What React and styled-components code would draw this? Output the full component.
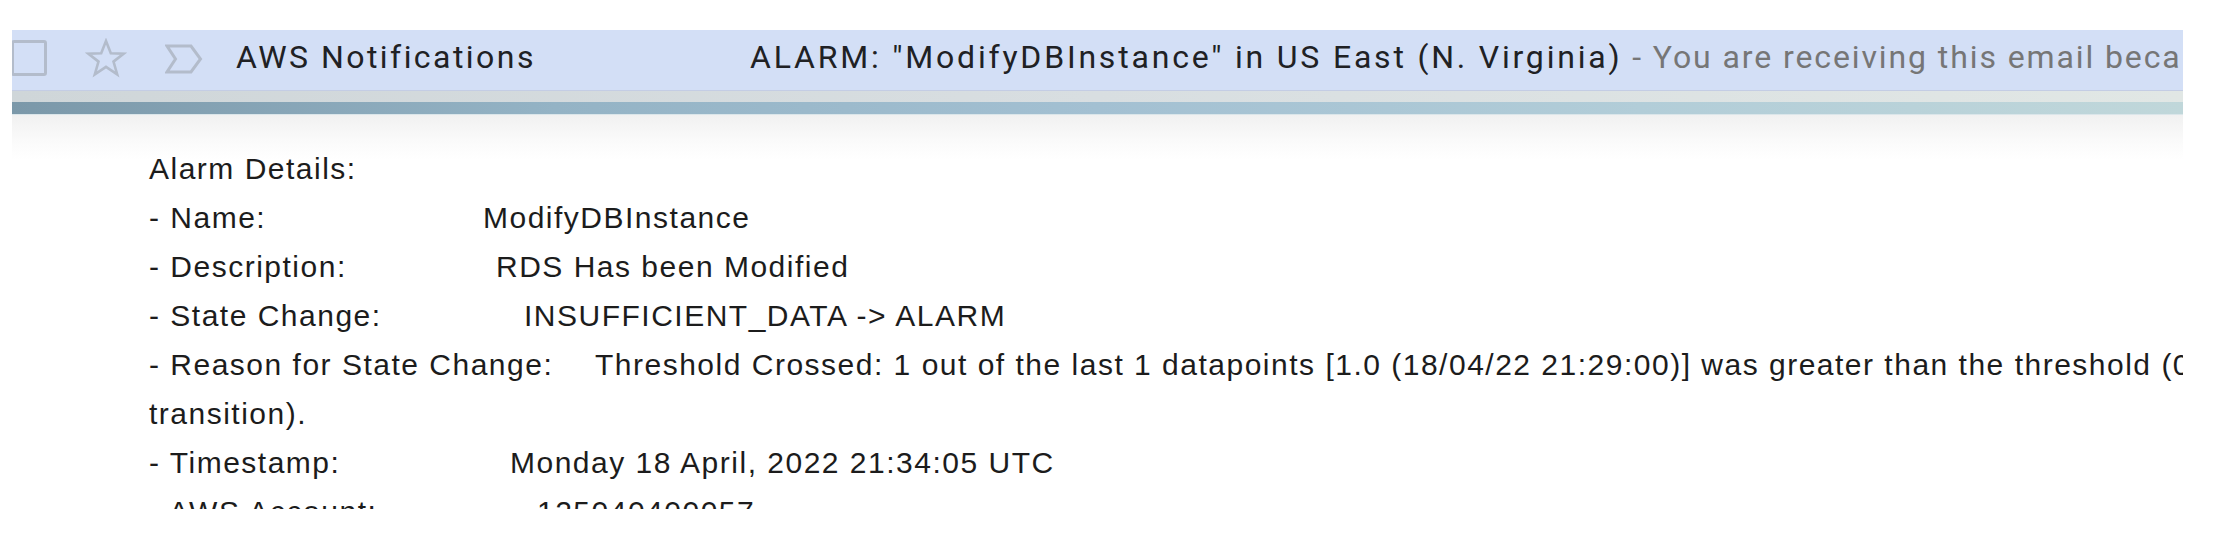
import React from "react";
import styled, { createGlobalStyle } from "styled-components";

const Global = createGlobalStyle`
  html, body { margin: 0; padding: 0; background: #ffffff; }
  body { width: 2226px; height: 558px; overflow: hidden; }
`;

const Page = styled.div`
  padding: 30px 0 0 12px;
`;

const Card = styled.div`
  width: 2171px;
  overflow: hidden;
`;

const Row = styled.div`
  display: flex;
  align-items: center;
  height: 60px;
  background: #d3dff6;
  border-bottom: 1px solid #c4cde4;
  white-space: nowrap;
  overflow: hidden;
  font-family: Roboto, "Liberation Sans", sans-serif;
  font-size: 32px;
  color: #202124;
`;

const Checkbox = styled.span`
  flex: none;
  box-sizing: border-box;
  width: 36px;
  height: 36px;
  margin-left: -1px;
  margin-top: -4px;
  border: 3px solid #b3bccb;
  border-radius: 3px;
`;

const IconBox = styled.span`
  flex: none;
  display: flex;
  margin-left: ${(p) => p.$ml}px;
  margin-top: ${(p) => p.$mt || 0}px;
`;

const Sender = styled.span`
  flex: none;
  width: 514px;
  margin-left: 33px;
  margin-top: -6px;
  letter-spacing: 2.45px;
`;

const Subject = styled.span`
  flex: none;
  margin-top: -6px;
  letter-spacing: 2.8px;
`;

const Snippet = styled.span`
  color: #767676;
  letter-spacing: 1.9px;
`;

const GreyBand = styled.div`
  height: 11px;
  background: linear-gradient(90deg, #cfd6d9 0%, #d8dee1 50%, #e1e7e5 100%);
`;

const BlueBand = styled.div`
  height: 12px;
  background: linear-gradient(90deg, #7b98a9 0%, #94b3c5 25%, #a3c0d2 50%, #b2cdd8 75%, #c0d7da 100%);
  border-bottom: 1px solid #dbe6ea;
`;

const Body = styled.div`
  height: 394px;
  overflow: hidden;
  padding: 29px 0 0 137px;
  box-sizing: border-box;
  background: linear-gradient(180deg, #f1f1f1 0px, #fbfbfb 28px, #ffffff 45px);
  font-family: "Liberation Sans", Arial, sans-serif;
  font-size: 30px;
  letter-spacing: 1.5px;
  line-height: 49px;
  color: #1c1c1c;
`;

const Line = styled.div`
  display: flex;
  white-space: nowrap;
`;

const Label = styled.span`
  flex: none;
  width: ${(p) => p.$w}px;
`;

const Value = styled.span`
  flex: none;
`;

const StarIcon = () => (
  <svg width="42" height="40" viewBox="0 0 42 40" fill="none">
    <path
      d="M21 3 L25.8 15.2 L38.8 15.6 L28.5 23.6 L32.2 36.4 L21 28.9 L9.8 36.4 L13.5 23.6 L3.2 15.6 L16.2 15.2 Z"
      stroke="#b3bccb"
      strokeWidth="2.6"
      strokeLinejoin="miter"
    />
  </svg>
);

const ImportantIcon = () => (
  <svg width="38" height="30" viewBox="0 0 38 30" fill="none">
    <path
      d="M2 2 H26 L35.5 15 L26 28 H2 L10.5 15 Z"
      stroke="#b3bccb"
      strokeWidth="3"
      strokeLinejoin="miter"
    />
  </svg>
);

const details = [
  { label: "- Name:", w: 334, value: "ModifyDBInstance" },
  { label: "- Description:", w: 347, value: "RDS Has been Modified" },
  { label: "- State Change:", w: 375, value: "INSUFFICIENT_DATA -> ALARM" },
  {
    label: "- Reason for State Change:",
    w: 446,
    value:
      "Threshold Crossed: 1 out of the last 1 datapoints [1.0 (18/04/22 21:29:00)] was greater than the threshold (0.0) (minimum 1 datapoint for OK -> ALARM",
  },
];

export default function App() {
  return (
    <>
      <Global />
      <Page>
        <Card>
          <Row>
            <Checkbox />
            <IconBox $ml={38} $mt={-4}>
              <StarIcon />
            </IconBox>
            <IconBox $ml={38} $mt={-3}>
              <ImportantIcon />
            </IconBox>
            <Sender>AWS Notifications</Sender>
            <Subject>
              ALARM: "ModifyDBInstance" in US East (N. Virginia)
              <Snippet> - You are receiving this email because your Amazon CloudWatch Alarm "ModifyDBInstance" in the US East (N. Virginia) region has entered the ALARM state</Snippet>
            </Subject>
          </Row>
          <GreyBand />
          <BlueBand />
          <Body>
            <Line>Alarm Details:</Line>
            {details.map((d) => (
              <Line key={d.label}>
                <Label $w={d.w}>{d.label}</Label>
                <Value>{d.value}</Value>
              </Line>
            ))}
            <Line>transition).</Line>
            <Line>
              <Label $w={361}>- Timestamp:</Label>
              <Value>Monday 18 April, 2022 21:34:05 UTC</Value>
            </Line>
            <Line>
              <Label $w={388}>- AWS Account:</Label>
              <Value>125040400057</Value>
            </Line>
          </Body>
        </Card>
      </Page>
    </>
  );
}
